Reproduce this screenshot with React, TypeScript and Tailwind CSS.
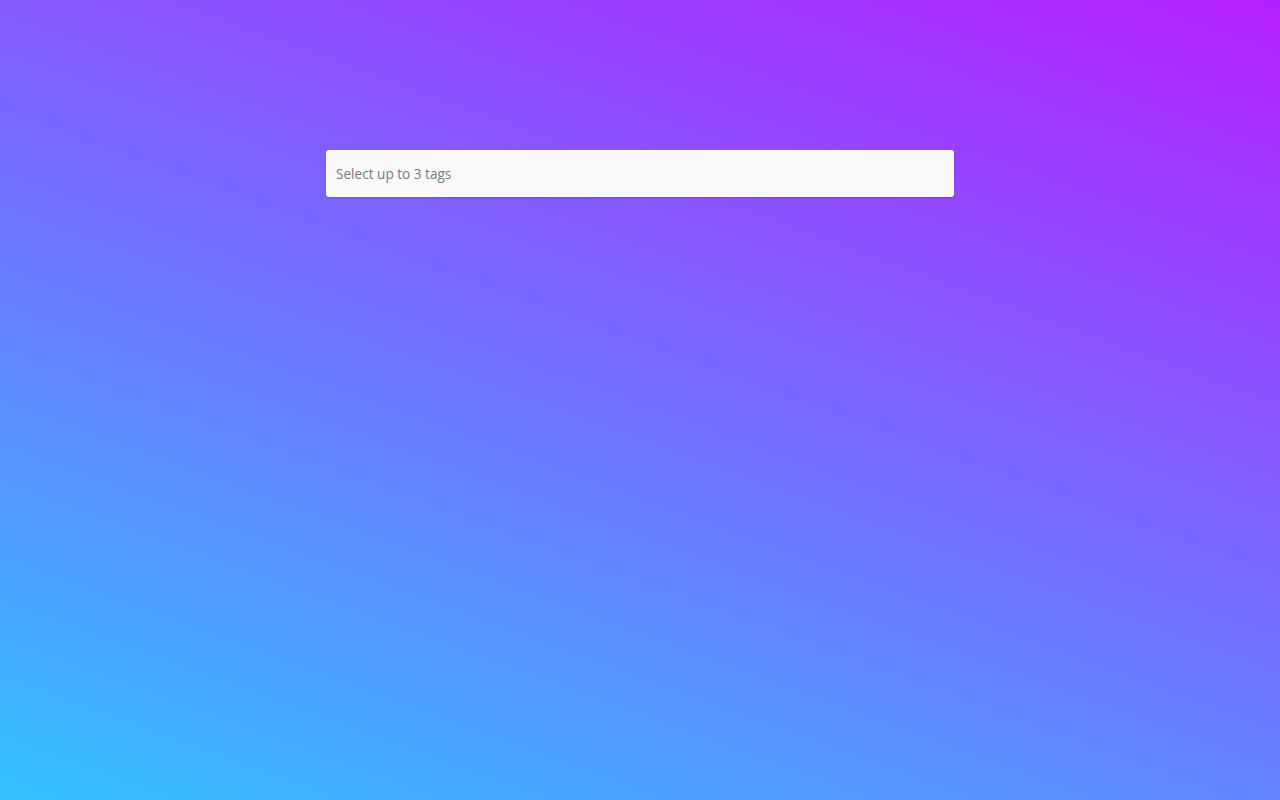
import React from 'react';

export default function App() {
  return (
    <div className="min-h-screen w-full bg-[linear-gradient(20deg,#33c1ff,#b31fff)] flex justify-center pt-[150px] font-['Open_Sans',sans-serif]">
      <div className="w-[628px] h-[47px] bg-[#f9f9f9] rounded-[3px] shadow-[0_1px_2px_rgba(0,0,0,0.15)] flex items-center px-[10px] pt-[2px]">
        <input
          className="w-full bg-transparent outline-none text-[13.6px] text-[#333] placeholder:text-[#7a7a7a]"
          placeholder="Select up to 3 tags"
        />
      </div>
    </div>
  );
}
